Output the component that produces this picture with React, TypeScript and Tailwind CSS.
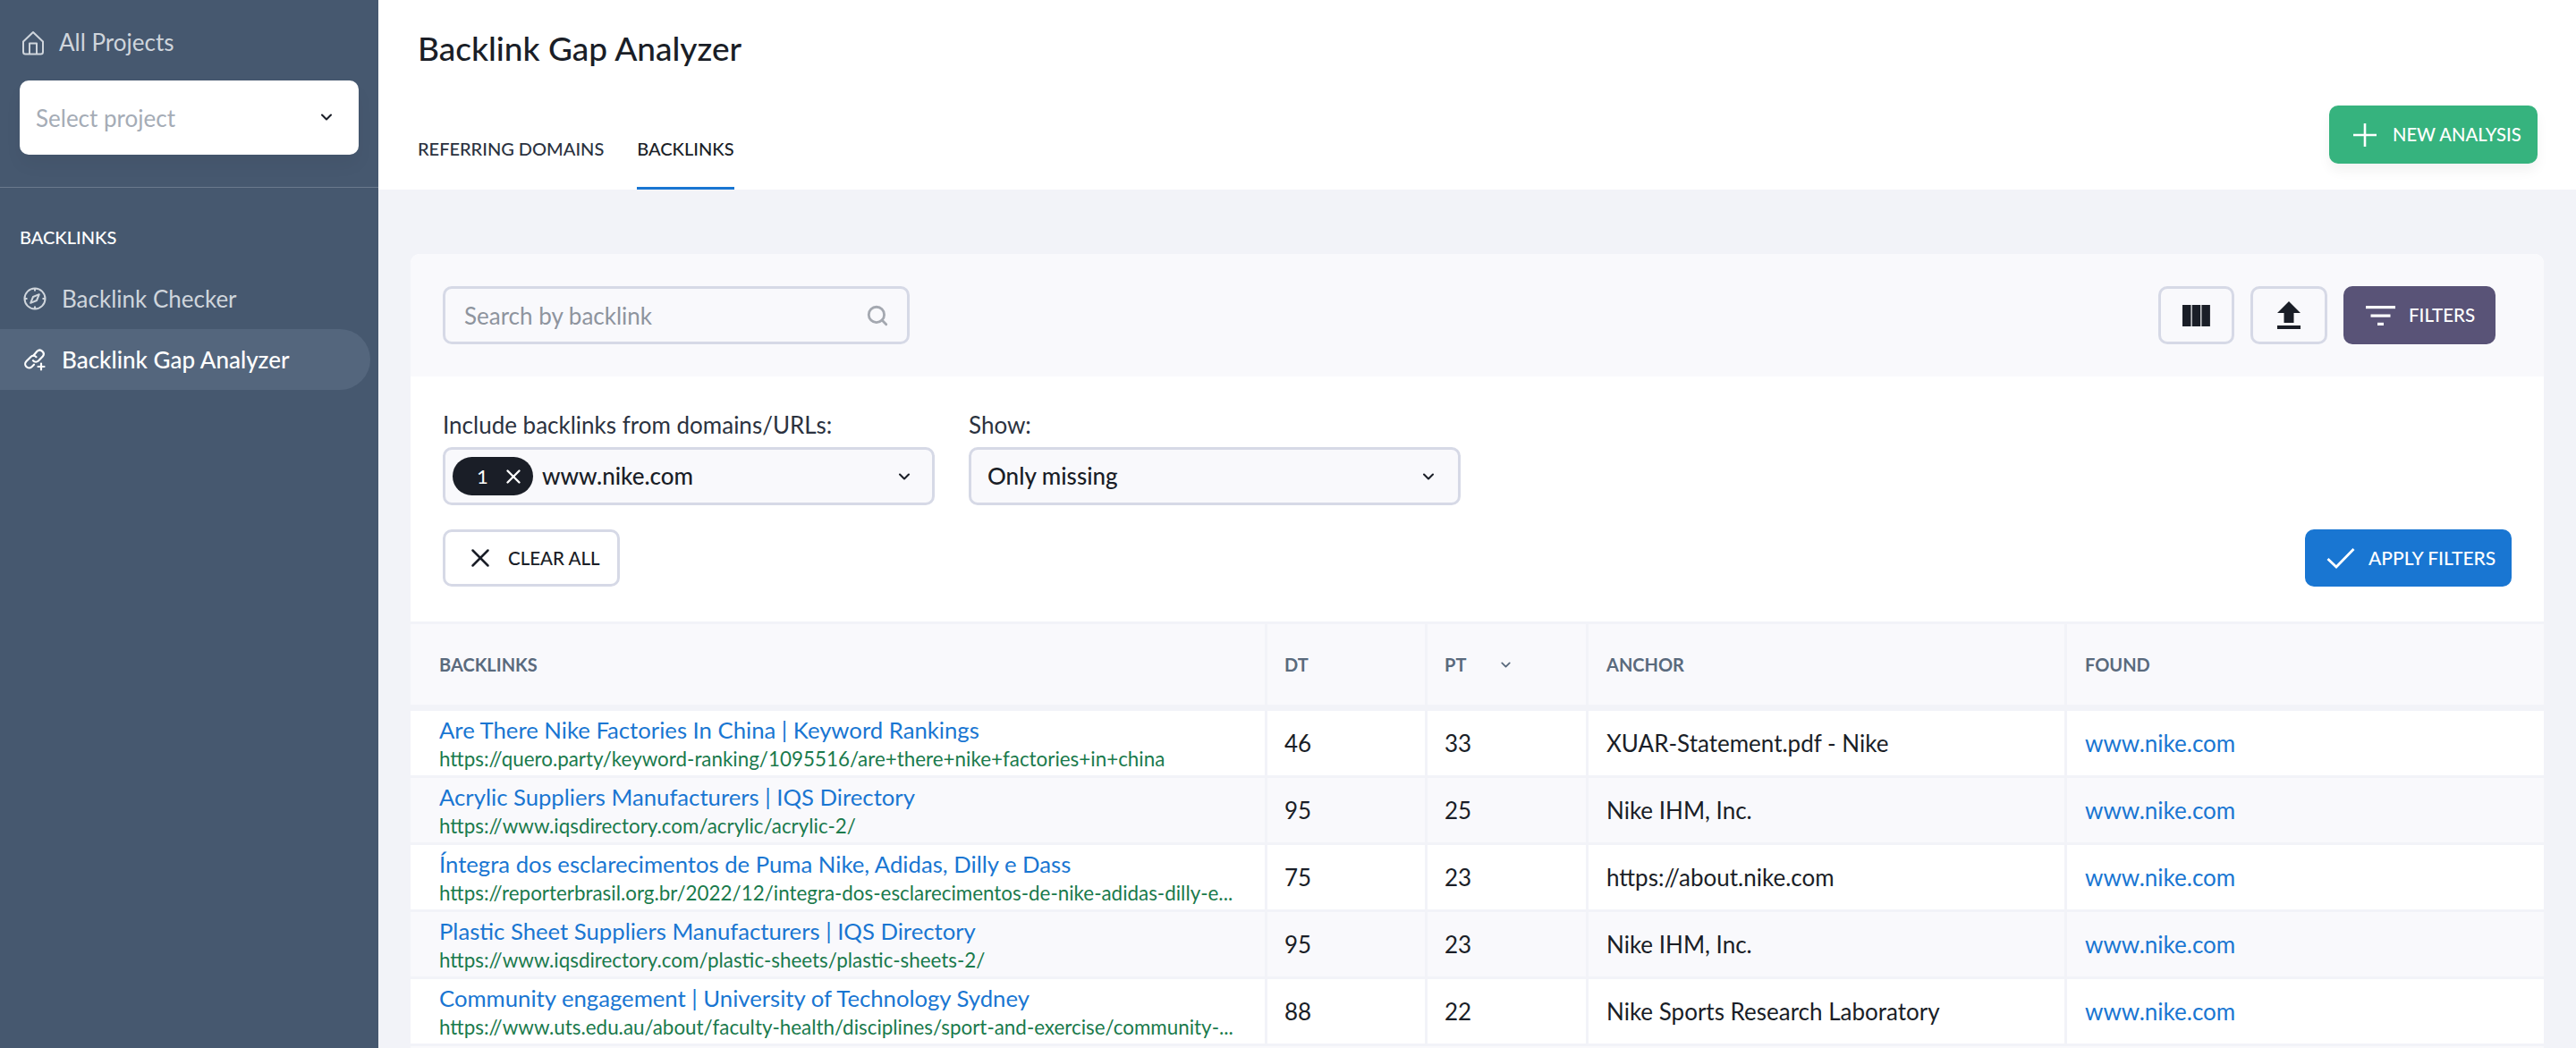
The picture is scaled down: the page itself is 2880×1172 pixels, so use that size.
import { ChevronDown, Search, X } from 'lucide-react';

const rows = [
  {
    title: 'Are There Nike Factories In China | Keyword Rankings',
    url: 'https://quero.party/keyword-ranking/1095516/are+there+nike+factories+in+china',
    dt: '46',
    pt: '33',
    anchor: 'XUAR-Statement.pdf - Nike',
  },
  {
    title: 'Acrylic Suppliers Manufacturers | IQS Directory',
    url: 'https://www.iqsdirectory.com/acrylic/acrylic-2/',
    dt: '95',
    pt: '25',
    anchor: 'Nike IHM, Inc.',
  },
  {
    title: 'Íntegra dos esclarecimentos de Puma Nike, Adidas, Dilly e Dass',
    url: 'https://reporterbrasil.org.br/2022/12/integra-dos-esclarecimentos-de-nike-adidas-dilly-e...',
    dt: '75',
    pt: '23',
    anchor: 'https://about.nike.com',
  },
  {
    title: 'Plastic Sheet Suppliers Manufacturers | IQS Directory',
    url: 'https://www.iqsdirectory.com/plastic-sheets/plastic-sheets-2/',
    dt: '95',
    pt: '23',
    anchor: 'Nike IHM, Inc.',
  },
  {
    title: 'Community engagement | University of Technology Sydney',
    url: 'https://www.uts.edu.au/about/faculty-health/disciplines/sport-and-exercise/community-...',
    dt: '88',
    pt: '22',
    anchor: 'Nike Sports Research Laboratory',
  },
];

function HomeIcon() {
  return (
    <svg width="26" height="28" viewBox="0 0 26 28" fill="none" stroke="#cfd5dc" strokeWidth="2" strokeLinejoin="round">
      <path d="M2 12.5 13 2l11 10.5V24a2.5 2.5 0 0 1-2.500 2.500h-17A2.500 2.500 0 0 1 2 24z" />
      <path d="M9 26.500V14.500h8v12" />
    </svg>
  );
}

function CompassIcon() {
  return (
    <svg width="26" height="26" viewBox="0 0 26 26" fill="none" stroke="#cfd5dc" strokeWidth="2">
      <circle cx="13" cy="13" r="11.500" />
      <path d="M13 1.500v3M13 21.500v3M1.500 13h3M21.500 13h3" />
      <path d="M17.800 8.200 15 15l-6.800 2.800L11 11z" strokeLinejoin="round" />
    </svg>
  );
}

function LinkPlusIcon() {
  return (
    <svg width="26" height="26" viewBox="0 0 26 26" fill="none" stroke="#ffffff" strokeWidth="2.200" strokeLinecap="round">
      <path d="M11.500 8.500 15.500 3.800a4.300 4.300 0 0 1 6.300 5.800L17 14.500a4.300 4.300 0 0 1-6-.3" />
      <path d="M14.500 10.200a4.300 4.300 0 0 0-6-.2l-5 5a4.300 4.300 0 0 0 6 6.200l2.500-2.500" />
      <path d="M20 17.500v7M16.500 21h7" />
    </svg>
  );
}

function ColumnsIcon() {
  return (
    <svg width="31" height="24" viewBox="0 0 31 24" fill="#1a1e27">
      <rect x="0" y="0" width="9.500" height="24" />
      <rect x="10.700" y="0" width="9.500" height="24" />
      <rect x="21.400" y="0" width="9.500" height="24" />
    </svg>
  );
}

function UploadIcon() {
  return (
    <svg width="26" height="31" viewBox="0 0 26 31" fill="#1a1e27">
      <path d="M13 0 26 13h-7.500v11h-11V13H0z" />
      <rect x="0" y="27" width="26" height="4" />
    </svg>
  );
}

function FilterIcon() {
  return (
    <svg width="33" height="22" viewBox="0 0 33 22" fill="#ffffff">
      <rect x="0" y="0" width="33" height="3.200" />
      <rect x="5.500" y="9.500" width="22" height="3.200" />
      <rect x="13" y="18.800" width="7" height="3.200" />
    </svg>
  );
}

function PlusIcon() {
  return (
    <svg width="26" height="26" viewBox="0 0 26 26" stroke="#ffffff" strokeWidth="2.600">
      <path d="M13 0v26M0 13h26" />
    </svg>
  );
}

function CheckIcon() {
  return (
    <svg width="32" height="24" viewBox="0 0 32 24" fill="none" stroke="#ffffff" strokeWidth="2.800">
      <path d="M1.500 13 11 22 30.500 2" />
    </svg>
  );
}

export default function App() {
  return (
    <div className="flex h-[1172px] w-[2880px] overflow-hidden bg-[#f2f3f8] font-[Lato,sans-serif] text-[#1a1e27]">
      <aside className="flex w-[423px] shrink-0 flex-col bg-[#46586f]">
        <div className="flex h-[90px] items-center gap-[16px] px-[24px] pt-[5px] text-[26px] text-[#cfd5dc]">
          <HomeIcon />
          All Projects
        </div>
        <div className="mx-[22px] flex h-[83px] items-center justify-between rounded-[10px] bg-white pl-[18px] pr-[26px] pt-[2px] text-[26px] text-[#a5acb6] shadow-[0_12px_20px_rgba(0,0,0,0.04)]">
          Select project
          <ChevronDown className="mb-[4px] size-[20px] text-[#1a1e27]" strokeWidth={2.500} />
        </div>
        <div className="mt-[36px] border-t border-[#6b7a8d] pt-[43px] pl-[22px] text-[20px] font-medium leading-[24px] text-white">
          BACKLINKS
        </div>
        <div className="mt-[23px] flex h-[68px] items-center gap-[17px] pl-[26px] text-[26px] text-[#cfd5dc]">
          <CompassIcon />
          Backlink Checker
        </div>
        <div className="mr-[9px] flex h-[68px] items-center gap-[17px] rounded-r-[34px] bg-[#54667d] pl-[26px] text-[26px] font-medium text-white">
          <LinkPlusIcon />
          Backlink Gap Analyzer
        </div>
      </aside>

      <main className="min-w-0 flex-1">
        <header className="relative h-[212px] bg-white pl-[44px]">
          <h1 className="pt-[28px] text-[37px] font-medium leading-[52px] text-[#1a1e27]">Backlink Gap Analyzer</h1>
          <div className="mt-[72px] flex gap-[37px] text-[20px] font-medium leading-[28px] text-[#1a1e27]">
            <div className="h-[60px] text-[#2b3240]">REFERRING DOMAINS</div>
            <div className="h-[60px] border-b-[3px] border-[#1976d2]">BACKLINKS</div>
          </div>
          <button
            type="button"
            className="absolute right-[43px] top-[118px] flex h-[65px] w-[233px] items-center gap-[18px] rounded-[10px] bg-[#36b37e] pl-[27px] text-[20.200px] font-medium text-white shadow-[0_8px_14px_rgba(0,0,0,0.05)]"
          >
            <PlusIcon />
            NEW ANALYSIS
          </button>
        </header>

        <section className="ml-[36px] mr-[36px] mt-[72px] overflow-hidden rounded-t-[10px] bg-white">
          <div className="flex h-[137px] items-start justify-between bg-[#f9f9fc] pl-[36px] pr-[54px] pt-[36px]">
            <div className="flex h-[65px] w-[522px] items-center justify-between rounded-[10px] border-[3px] border-[#d6d9e6] pl-[21px] pr-[20px] text-[26px] text-[#8e949e]">
              <span className="pt-[2px]">Search by backlink</span>
              <Search className="size-[26px] text-[#a4a8b0]" strokeWidth={2.600} />
            </div>
            <div className="flex gap-[18px]">
              <button type="button" className="flex h-[65px] w-[85px] items-center justify-center rounded-[10px] border-[3px] border-[#d6d9e6]">
                <ColumnsIcon />
              </button>
              <button type="button" className="flex h-[65px] w-[86px] items-center justify-center rounded-[10px] border-[3px] border-[#d6d9e6]">
                <UploadIcon />
              </button>
              <button type="button" className="flex h-[65px] w-[170px] items-center gap-[15px] rounded-[10px] bg-[#595377] pl-[25px] text-[20.500px] font-medium text-white">
                <FilterIcon />
                FILTERS
              </button>
            </div>
          </div>

          <div className="h-[274px] bg-white pl-[36px] pr-[36px] pt-[36px]">
            <div className="flex gap-[38px]">
              <div className="w-[550px]">
                <div className="text-[26px] leading-[36px] text-[#2b3240]">Include backlinks from domains/URLs:</div>
                <div className="mt-[7px] flex h-[65px] items-center justify-between rounded-[10px] border-[3px] border-[#d6d9e6] bg-[#f9f9fc] pl-[8px] pr-[21px]">
                  <div className="flex items-center gap-[10px]">
                    <div className="flex h-[43px] w-[90px] items-center gap-[15px] rounded-full bg-[#1a1e27] pl-[27px] text-[22px] text-white">
                      1
                      <X className="size-[26px]" strokeWidth={2.200} />
                    </div>
                    <span className="text-[26px] font-medium">www.nike.com</span>
                  </div>
                  <ChevronDown className="size-[20px]" strokeWidth={2.500} />
                </div>
              </div>
              <div className="w-[550px]">
                <div className="text-[26px] leading-[36px] text-[#2b3240]">Show:</div>
                <div className="mt-[7px] flex h-[65px] items-center justify-between rounded-[10px] border-[3px] border-[#d6d9e6] bg-[#f9f9fc] pl-[18px] pr-[23px] text-[26px] font-medium">
                  Only missing
                  <ChevronDown className="size-[20px]" strokeWidth={2.500} />
                </div>
              </div>
            </div>
            <div className="mt-[27px] flex items-center justify-between">
              <button type="button" className="flex h-[64px] w-[198px] items-center gap-[14px] rounded-[10px] border-[3px] border-[#d6d9e6] pl-[22px] text-[20.500px] font-medium">
                <X className="size-[34px]" strokeWidth={1.800} />
                CLEAR ALL
              </button>
              <button type="button" className="flex h-[64px] w-[231px] items-center gap-[15px] rounded-[10px] bg-[#1976d2] pl-[24px] text-[21px] font-medium text-white">
                <CheckIcon />
                APPLY FILTERS
              </button>
            </div>
          </div>

          <div className="grid h-[100px] grid-cols-[958px_179px_180px_535px_1fr] border-y-[3px] border-b-[7px] border-[#f2f3f8] bg-[#f9f9fc] text-[20px] font-bold text-[#5a6a7d]">
            <div className="flex items-center border-r-[3px] border-[#f2f3f8] pl-[32px]">BACKLINKS</div>
            <div className="flex items-center border-r-[3px] border-[#f2f3f8] pl-[19px]">DT</div>
            <div className="flex items-center gap-[36px] border-r-[3px] border-[#f2f3f8] pl-[19px]">
              PT
              <ChevronDown className="size-[17px]" strokeWidth={2.500} />
            </div>
            <div className="flex items-center border-r-[3px] border-[#f2f3f8] pl-[20px]">ANCHOR</div>
            <div className="flex items-center pl-[20px]">FOUND</div>
          </div>

          {rows.map((row, i) => (
            <div
              key={row.url}
              className={
                'grid h-[75px] grid-cols-[958px_179px_180px_535px_1fr] border-b-[3px] border-[#f2f3f8] text-[26px] ' +
                (i % 2 === 0 ? 'bg-white' : 'bg-[#f9f9fc]')
              }
            >
              <div className="flex min-w-0 flex-col justify-center border-r-[3px] border-[#f2f3f8] pl-[32px]">
                <div className="whitespace-nowrap text-[25.700px] leading-[34px] text-[#1976d2]">{row.title}</div>
                <div className="whitespace-nowrap pt-[1px] text-[22.400px] leading-[30px] text-[#1a7a4c]">{row.url}</div>
              </div>
              <div className="flex items-center border-r-[3px] border-[#f2f3f8] pl-[19px]">{row.dt}</div>
              <div className="flex items-center border-r-[3px] border-[#f2f3f8] pl-[19px]">{row.pt}</div>
              <div className="flex items-center border-r-[3px] border-[#f2f3f8] pl-[20px]">{row.anchor}</div>
              <div className="flex items-center pl-[20px] text-[#1976d2]">www.nike.com</div>
            </div>
          ))}
          <div className="h-[40px] bg-[#f9f9fc]" />
        </section>
      </main>
    </div>
  );
}
